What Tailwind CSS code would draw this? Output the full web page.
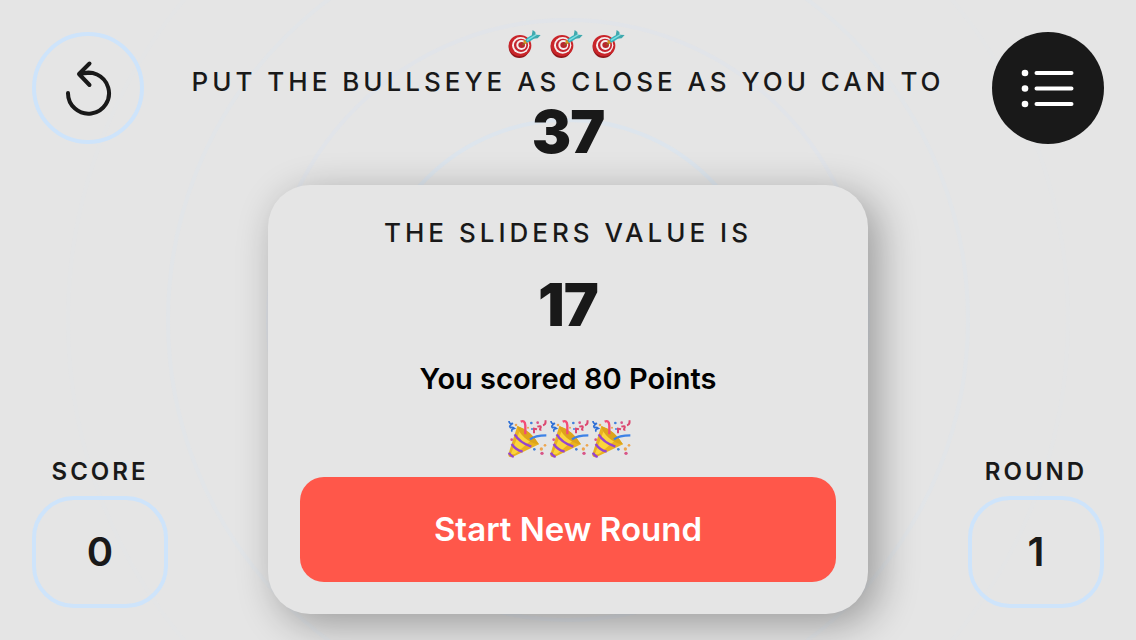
<!DOCTYPE html>
<html lang="en">
<head>
<meta charset="utf-8">
<meta name="viewport" content="width=device-width, initial-scale=1">
<title>Bullseye</title>
<script src="https://cdn.jsdelivr.net/npm/@tailwindcss/browser@4"></script>
</head>
<body class="bg-[#e5e5e5] text-[#191919] font-['Inter',sans-serif]">
<svg width="0" height="0" class="absolute" aria-hidden="true">
  <defs>
    <symbol id="dart" viewBox="42 24 126 96">
      <ellipse cx="85" cy="81" rx="32" ry="33" fill="#8f1418"/>
      <ellipse cx="87" cy="77" rx="34" ry="32" fill="#c9252a"/>
      <ellipse cx="89" cy="76" rx="26" ry="25" fill="#f6eeee"/>
      <ellipse cx="90" cy="76" rx="21" ry="20" fill="#c42530"/>
      <ellipse cx="91" cy="75" rx="15" ry="15" fill="#f6eeee"/>
      <ellipse cx="92" cy="75" rx="10" ry="9" fill="#b8262c"/>
      <path d="M94 75L106 66" stroke="#8a6a20" stroke-width="4"/>
      <path d="M101 59l8 10-7 3-5-7z" fill="#d69a20"/>
      <path d="M103 60c6-7 13-12 23-15l5 9c-8 6-15 11-23 14z" fill="#31b5be"/>
      <path d="M122 47l3-17 8 6 1 8 15 1-9 10-15 1z" fill="#3fa9ae"/>
      <path d="M108 61l28-17" stroke="#7fdde1" stroke-width="4"/>
    </symbol>
    <symbol id="popper" viewBox="42 36 126 126">
      <path d="M79 63L52 148q-1 10 11 9L144 118Q120 77 79 63z" fill="#eab220"/>
      <path d="M86 78L60 146q8 4 16-2L118 108z" fill="#fbd53b"/>
      <path d="M79 63q38 12 65 55-23-2-43-20T79 63z" fill="#dda41b"/>
      <path d="M71 88q14 24 50 37M62 117q12 18 33 23M54 143q3 9 14 13" fill="none" stroke="#9445cf" stroke-width="7"/>
      <path d="M103 88V62q-1-18-14-12" fill="none" stroke="#f34b76" stroke-width="7"/>
      <path d="M117 103q15-12 49-12" fill="none" stroke="#3d82e6" stroke-width="7"/>
      <path d="M54 48q0 10 12 7-14 8-8 13 7-2 12 2-12 3-6 10" fill="none" stroke="#2d6fd6" stroke-width="5"/>
      <path d="M129 85V71l9 2M139 65q12-4 10 3-5 8 2 6M156 61q10-3 7-15" fill="none" stroke="#dc4870" stroke-width="6"/>
      <g fill="#d85487"><circle cx="140" cy="53" r="4"/><circle cx="62" cy="104" r="4"/><circle cx="153" cy="145" r="5"/></g>
      <g fill="#4380db"><circle cx="121" cy="54" r="4"/><circle cx="130" cy="133" r="4"/><circle cx="123" cy="72" r="3"/></g>
      <g fill="#eda651"><circle cx="151" cy="132" r="5"/><circle cx="162" cy="121" r="4"/><circle cx="75" cy="60" r="4"/><circle cx="111" cy="68" r="3"/></g>
    </symbol>
  </defs>
</svg>
<div class="relative isolate min-h-screen overflow-hidden flex justify-between px-8 pt-8 pb-[26px]">
  <!-- Concentric rings behind the game -->
  <svg class="absolute -z-10 left-1/2 top-1/2 -translate-1/2 size-[1208px] max-w-none" viewBox="-604 -604 1208 1208" fill="none" stroke-width="4" aria-hidden="true">
    <circle r="100" stroke="#cee4fb" stroke-opacity=".7"/>
    <circle r="200" stroke="#cee4fb" stroke-opacity=".35"/>
    <circle r="300" stroke="#d3e0fb" stroke-opacity=".2"/>
    <circle r="400" stroke="#cee4fb" stroke-opacity=".12"/>
    <circle r="500" stroke="#cee4fb" stroke-opacity=".05"/>
  </svg>

  <div class="w-34 shrink-0 flex flex-col justify-between pb-[6px]">
    <button type="button" aria-label="Restart" class="size-28 rounded-full border-4 border-[#cee4fb] flex items-center justify-center">
      <svg class="size-14" viewBox="0 0 56 56" fill="none" stroke="#191919" stroke-width="4" stroke-linecap="round" stroke-linejoin="round">
        <path d="M8 33A20.500 20.500 0 1 0 20 14.500Q24 12.500 30 13"/>
        <path d="M29.500 3.500L19 14l10.500 11"/>
      </svg>
    </button>
    <div class="flex flex-col items-center gap-2">
      <h2 class="text-2xl font-semibold tracking-[3px]">SCORE</h2>
      <div class="w-full h-28 rounded-[42px] border-4 border-[#cee4fb] flex items-center justify-center text-[40px] font-semibold">0</div>
    </div>
  </div>

  <main class="flex-1 min-w-0 flex flex-col items-center">
    <div class="-mt-1 flex" role="img" aria-label="Three bullseyes">
      <svg class="w-[42px] h-8"><use href="#dart"/></svg>
      <svg class="w-[42px] h-8"><use href="#dart"/></svg>
      <svg class="w-[42px] h-8"><use href="#dart"/></svg>
    </div>
    <p class="mt-1 text-[26px] leading-9 font-medium tracking-[4px] whitespace-nowrap">PUT THE BULLSEYE AS CLOSE AS YOU CAN TO</p>
    <p class="text-[59px] leading-16 font-black tracking-[-1px]">37</p>

    <section class="mt-[21px] w-[600px] max-w-full rounded-[42px] bg-[#e5e5e5] p-8 flex flex-col items-center shadow-[10px_10px_40px_rgba(0,0,0,0.33)]">
      <p class="text-[26px] leading-8 font-medium tracking-[4px] whitespace-nowrap">THE SLIDERS VALUE IS</p>
      <p class="mt-6 text-[59px] leading-16 font-black tracking-[-1px]">17</p>
      <p class="mt-[22px] text-[29px] leading-10 font-semibold text-black">You scored 80 Points</p>
      <div class="mt-[18px] flex" role="img" aria-label="Three party poppers">
        <svg class="size-[42px]"><use href="#popper"/></svg>
        <svg class="size-[42px]"><use href="#popper"/></svg>
        <svg class="size-[42px]"><use href="#popper"/></svg>
      </div>
      <button type="button" class="mt-[18px] w-full h-[105px] rounded-3xl bg-[#ff574a] text-white text-[33px] font-semibold">Start New Round</button>
    </section>
  </main>

  <div class="w-34 shrink-0 flex flex-col justify-between pb-[6px]">
    <button type="button" aria-label="Leaderboard" class="size-28 self-end rounded-full bg-[#191919] flex items-center justify-center">
      <svg class="size-14" viewBox="0 0 56 56" fill="#fff" stroke="#fff" stroke-width="4" stroke-linecap="round">
        <path d="M16.500 13h35M16.500 28.500h35M16.500 44h35"/>
        <g stroke="none"><circle cx="5" cy="13" r="3.300"/><circle cx="5" cy="28.500" r="3.300"/><circle cx="5" cy="44" r="3.300"/></g>
      </svg>
    </button>
    <div class="flex flex-col items-center gap-2">
      <h2 class="text-2xl font-semibold tracking-[3px]">ROUND</h2>
      <div class="w-full h-28 rounded-[42px] border-4 border-[#cee4fb] flex items-center justify-center text-[40px] font-semibold">1</div>
    </div>
  </div>
</div>
</body>
</html>
